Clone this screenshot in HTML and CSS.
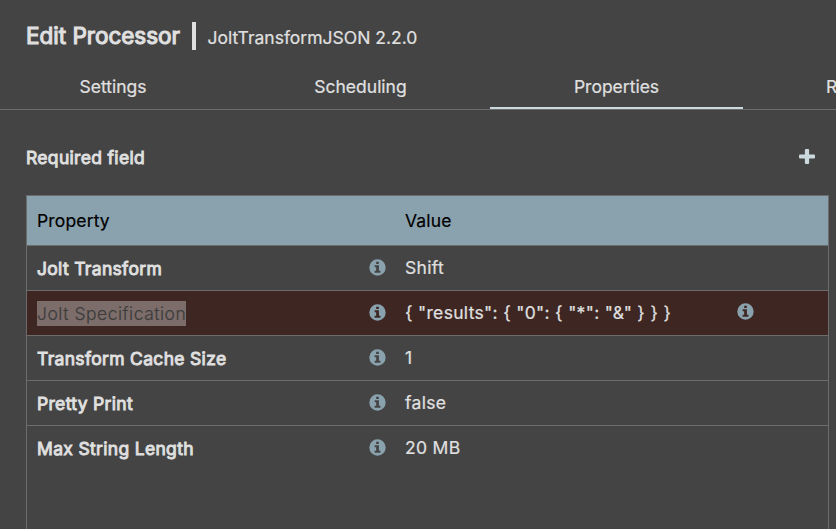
FILE: index.html
```html
<!DOCTYPE html>
<html lang="en">
<head>
<meta charset="utf-8">
<title>Edit Processor</title>
<link rel="stylesheet" href="styles.css">
</head>
<body>
<svg width="0" height="0" class="defs" aria-hidden="true">
  <symbol id="info" viewBox="-0.3 -0.3 16.6 16.6">
    <path fill-rule="evenodd" d="M8 0a8 8 0 1 1 0 16A8 8 0 0 1 8 0ZM6.700 2.500v2.200h2.600v-2.200ZM5.200 5.800v1.900h1.500v3.500H5.200V13.200h5.700v-2H9.400V5.800Z"/>
  </symbol>
</svg>
<header class="dialog-header">
  <h1 class="title"><span>Edit Processor</span></h1>
  <span class="divider"></span>
  <span class="type"><span>JoltTransformJSON 2.2.0</span></span>
</header>
<nav class="tabs">
  <a class="tab settings">Settings</a>
  <a class="tab scheduling">Scheduling</a>
  <a class="tab properties active">Properties</a>
  <a class="tab relationships">R</a>
</nav>
<main class="panel">
  <div class="toolbar">
    <span class="required">Required field</span>
    <svg class="plus" viewBox="0 0 15 15" preserveAspectRatio="none"><path d="M5.500 1a1 1 0 0 1 1-1h2a1 1 0 0 1 1 1v4.500H14a1 1 0 0 1 1 1v2a1 1 0 0 1-1 1H9.500V14a1 1 0 0 1-1 1h-2a1 1 0 0 1-1-1V9.500H1a1 1 0 0 1-1-1v-2a1 1 0 0 1 1-1h4.500Z"/></svg>
  </div>
  <div class="table">
    <div class="row head"><span class="name"><span>Property</span></span><span class="value"><span>Value</span></span></div>
    <div class="row"><span class="name"><b>Jolt Transform</b><svg class="info"><use href="#info"/></svg></span><span class="value"><span>Shift</span></span></div>
    <div class="row selected"><span class="name"><mark>Jolt Specification</mark><svg class="info"><use href="#info"/></svg></span><span class="value"><span>{ "results": { "0": { "*": "&amp;" } } }</span></span><svg class="info extra"><use href="#info"/></svg></div>
    <div class="row"><span class="name"><b>Transform Cache Size</b><svg class="info"><use href="#info"/></svg></span><span class="value"><span>1</span></span></div>
    <div class="row"><span class="name"><b>Pretty Print</b><svg class="info"><use href="#info"/></svg></span><span class="value"><span>false</span></span></div>
    <div class="row last"><span class="name"><b>Max String Length</b><svg class="info"><use href="#info"/></svg></span><span class="value"><span>20 MB</span></span></div>
  </div>
</main>
</body>
</html>
```
FILE: styles.css
```css
* { box-sizing: border-box; }
body {
  margin: 0;
  height: 529px;
  overflow: hidden;
  display: flex;
  flex-direction: column;
  background: #444;
  color: #e0e0e0;
  font: 400 17.5px/25px Inter, sans-serif;
  -webkit-text-stroke: 0.2px currentColor;
  white-space: nowrap;
}
.defs { position: absolute; }
.dialog-header {
  height: 66px;
  flex: none;
  display: flex;
  align-items: flex-start;
  padding: 22px 0 0 26px;
}
.title {
  margin: 0;
  width: 165.500px;
  font-size: 22.500px;
  font-weight: 400;
  line-height: 28px;
  -webkit-text-stroke: 1.1px #e0e0e0;
}
.divider { width: 4px; height: 28px; background: #e0e0e0; }
.type { margin: 3px 0 0 12px; }
.tabs {
  height: 44px;
  flex: none;
  display: flex;
  overflow: hidden;
  border-bottom: 1px solid #6c6c6c;
}
.tab {
  flex: none;
  text-align: center;
  padding-top: 8px;
}
.settings { width: 226px; }
.scheduling { width: 264px; padding-left: 5px; }
.properties { width: 253px; }
.relationships { padding-left: 83px; width: 93px; text-align: left; }
.active { border-bottom: 2px solid #cbd8dd; }
.panel {
  flex: 1;
  min-height: 0;
  display: flex;
  flex-direction: column;
  padding: 0 7px 0 26px;
}
.toolbar {
  height: 85px;
  flex: none;
  display: flex;
  justify-content: space-between;
  padding: 35px 14px 0 0;
  letter-spacing: 0.320px;
}
.required, b { font-weight: 400; -webkit-text-stroke: 0.9px #e0e0e0; }
.plus { width: 16px; height: 15px; margin-top: 4px; fill: #cbd8dd; }
.table {
  flex: 1;
  border: 1px solid #6c6c6c;
  border-bottom: 0;
  letter-spacing: 0.320px;
}
.row {
  height: 45px;
  display: flex;
  align-items: center;
  padding-bottom: 1px;
  border-bottom: 1px solid #6c6c6c;
}
.head { height: 50px; padding: 0; background: #8aa2ae; color: #000; letter-spacing: 0.150px; }
.selected { background: #3e2723; }
.last { border-bottom-color: transparent; }
.name {
  width: 368px;
  padding: 0 9px 0 10px;
  display: flex;
  align-items: center;
  justify-content: space-between;
}
.name b { padding-top: 2px; }
.value { width: 333px; padding-left: 10px; }
.info { width: 17px; height: 17px; fill: #8aa2ae; }
.extra { margin: 0 0 2px 9px; }
mark {
  background: #7c6d6a;
  color: #3c3c3c;
  font-weight: 300;
  letter-spacing: 0.510px;
  margin-top: 1px;
}
```
